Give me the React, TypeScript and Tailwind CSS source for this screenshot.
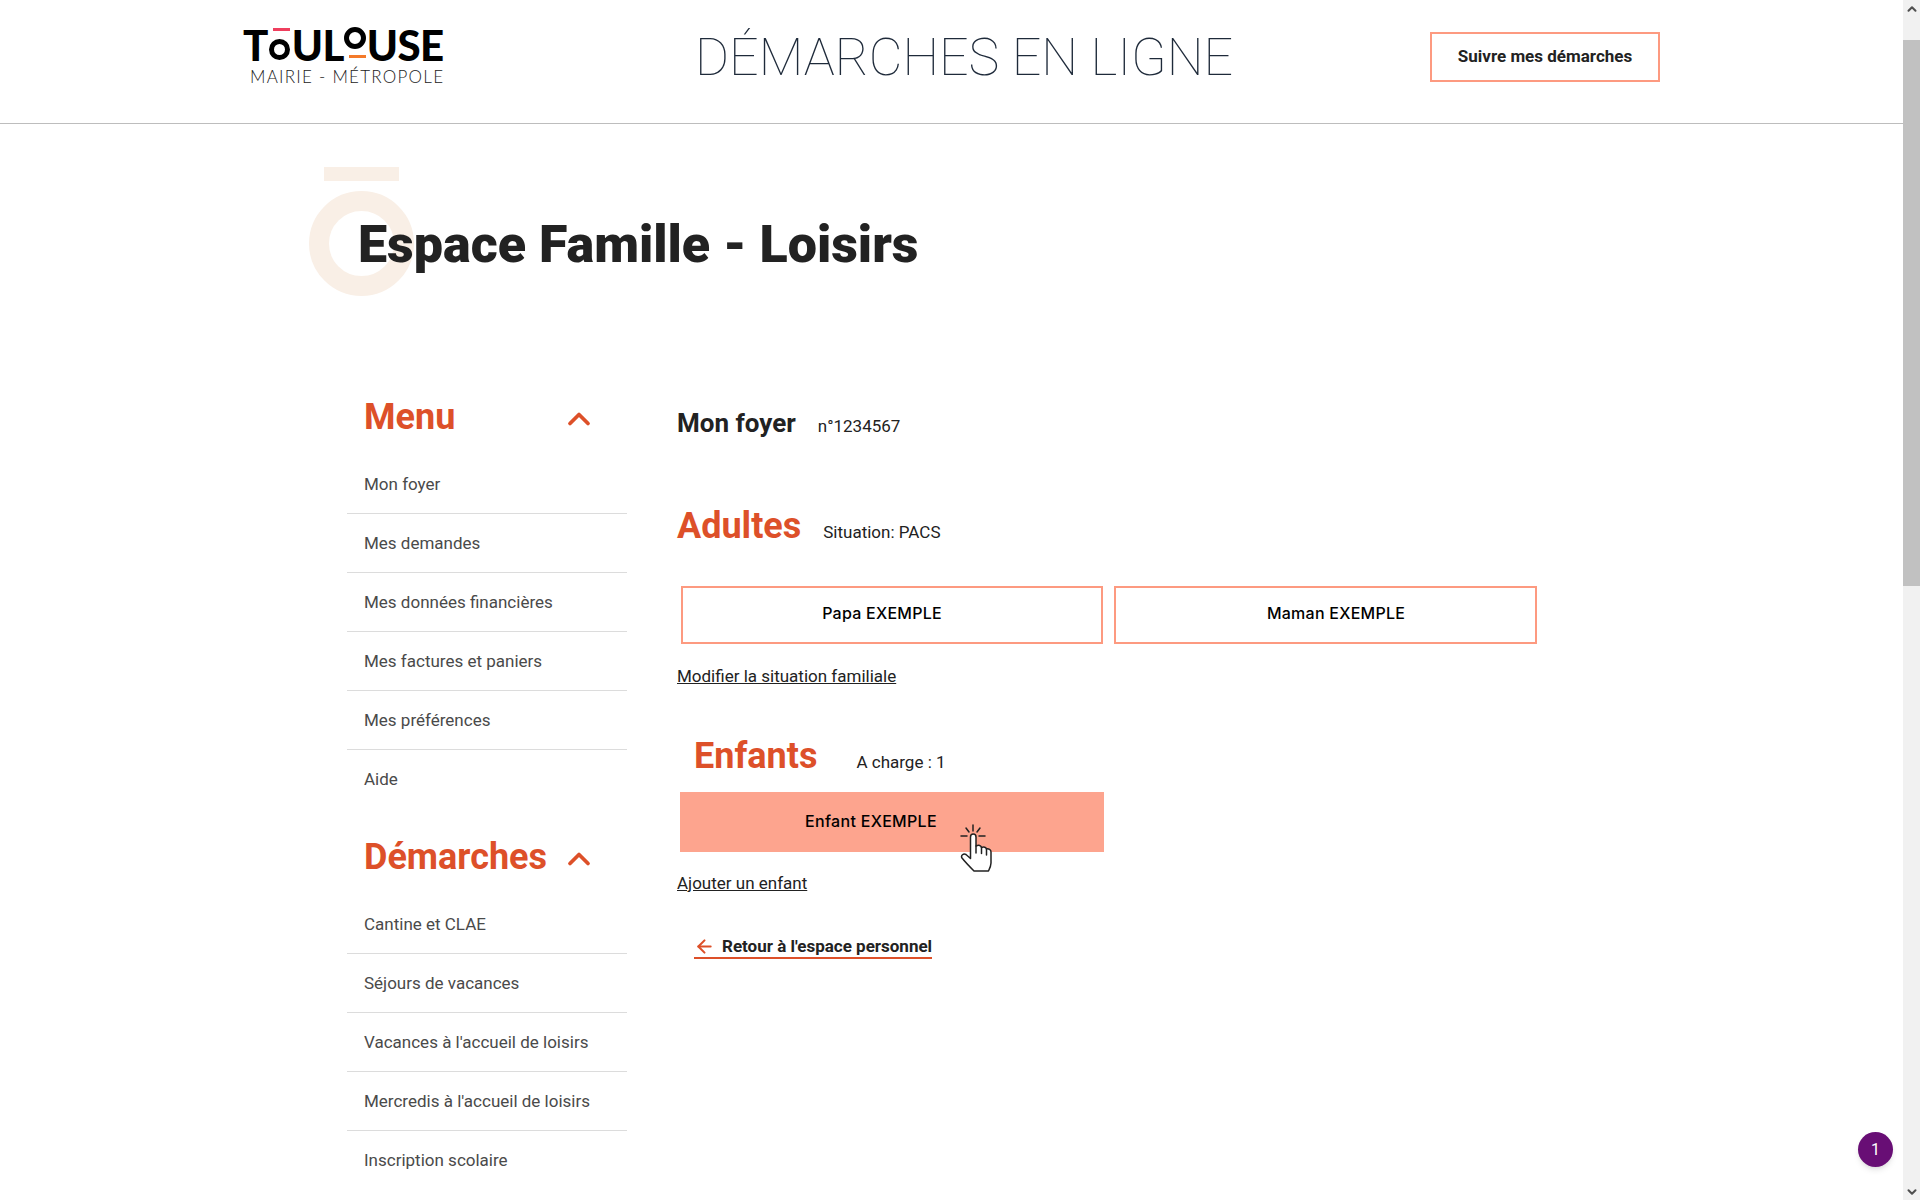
import React from 'react';
import { ArrowLeft, ChevronDown, ChevronUp } from 'lucide-react';

const menuItems = ['Mon foyer', 'Mes demandes', 'Mes données financières', 'Mes factures et paniers', 'Mes préférences', 'Aide'];
const demarches = ['Cantine et CLAE', 'Séjours de vacances', "Vacances à l'accueil de loisirs", 'Mercredis à l\'accueil de loisirs', 'Inscription scolaire'];

const Logo = () => (
  <div className="flex w-[201px] flex-col">
    {/* Lettres du logo */}
    <div className="flex h-[36px] items-start text-[42px] font-black leading-[37px] tracking-[-0.6px] text-black font-['Lato']">
      <span>T</span>
      <span className="ml-[1px] mr-[2px] flex w-[21px] flex-col items-end">
        <span className="mt-[1px] h-[3px] w-[17px] bg-[#ef3f5e]" />
        <span className="mt-[8px] size-[21px] rounded-full border-[5px] border-black" />
      </span>
      <span>UL</span>
      <span className="mx-[1px] flex w-[21px] flex-col items-end">
        <span className="size-[22px] rounded-full border-[5px] border-black" />
        <span className="mt-[6px] h-[3px] w-[17px] bg-[#f47a2a]" />
      </span>
      <span>USE</span>
    </div>
    <div className="mt-[4px] whitespace-nowrap pl-[7px] text-[17px] font-light leading-[20px] tracking-[1.25px] text-[#222] font-['Lato']">
      MAIRIE - MÉTROPOLE
    </div>
  </div>
);

const HandCursor = () => (
  <svg className="absolute left-[280px] top-[31px]" width="33" height="52" viewBox="0 0 33 50" fill="none" stroke="#222" strokeWidth="1.5" strokeLinecap="round" strokeLinejoin="round">
    <path d="M13 1v6M6 4l3 4M20 4l-3 4M1 12h6M19 12h6" />
    <path fill="#fff" d="M10.5 13c0-4 5.5-4 5.5 0v9c3-1.5 5-.5 5.5 1.5 2.5-1 4.5 0 5 1.5 2-.5 4.5.5 4.5 3v11c0 3-1 5-2.5 8H14c-4-4-8-8-12-13-1.5-2.5 1.5-5 4-3.5l4.5 4z" />
    <path d="M16 22v7M21.5 23.5v6M26.5 25v6" />
  </svg>
);

const SideSection = ({ title, items, className }: { title: string; items: string[]; className?: string }) => (
  <div className={className}>
    <div className="flex h-[76px] items-center justify-between pl-[17px] pr-[30px]">
      <h2 className="text-[36px] font-bold text-[#dd5029]">{title}</h2>
      <ChevronUp size={36} strokeWidth={2.5} className="mt-[3px] text-[#dd5029]" />
    </div>
    <ul>
      {items.map((item) => (
        <li key={item} className="flex h-[59px] items-center border-b border-[#dcdcdc] pl-[17px] pt-[1px] text-[17px] text-[#4a4a4a] last:border-b-0">
          {item}
        </li>
      ))}
    </ul>
  </div>
);

const Scrollbar = () => (
  <div className="flex h-[1200px] w-[17px] shrink-0 flex-col bg-[#f1f1f1]">
    <div className="flex h-[17px] items-center justify-center">
      <ChevronUp size={14} strokeWidth={3.5} className="text-[#505050]" />
    </div>
    <div className="mt-[23px] h-[546px] bg-[#c1c1c1]" />
    <div className="mt-auto flex h-[17px] items-center justify-center">
      <ChevronDown size={14} strokeWidth={3.5} className="text-[#505050]" />
    </div>
  </div>
);

export default function App() {
  return (
    <div className="flex h-[1200px] overflow-hidden bg-white font-['Roboto'] text-[#222]">
      <div className="relative min-w-0 flex-1">
        {/* Header */}
        <header className="flex h-[124px] items-center border-b border-[#bdbdbd] pb-[10px] pl-[243px] pr-[243px]">
          <Logo />
          <p className="ml-[251px] mt-[2px] whitespace-nowrap text-[52px] font-thin leading-none text-[#1e2a3a]">DÉMARCHES EN LIGNE</p>
          <button className="ml-auto h-[50px] w-[230px] border-2 border-[#fd9a80] text-[17px] font-bold text-[#222]">Suivre mes démarches</button>
        </header>

        {/* Titre */}
        <div className="relative h-[255px] pl-[358px] pt-[91px]">
          <div className="absolute left-[324px] top-[43px] h-[14px] w-[75px] bg-[#f9efe6]" />
          <div className="absolute left-[309px] top-[67px] h-[105px] w-[105px] rounded-full border-[20px] border-[#f9efe6]" />
          <h1 className="relative text-[52px] font-black leading-[60px] text-[#222]">Espace Famille - Loisirs</h1>
        </div>

        <div className="flex pl-[347px]">
          {/* Menu latéral */}
          <aside className="w-[280px] shrink-0">
            <SideSection title="Menu" items={menuItems} />
            <SideSection title="Démarches" items={demarches} className="mt-[10px]" />
          </aside>

          {/* Contenu */}
          <main className="relative ml-[50px] w-[860px]">
            <div className="flex items-baseline pt-[24px]">
              <h2 className="text-[26px] font-bold leading-[40px]">Mon foyer</h2>
              <span className="ml-[22px] text-[17px]">n°1234567</span>
            </div>

            <div className="mt-[58px] flex items-baseline">
              <h2 className="text-[36px] font-bold leading-[50px] text-[#dd5029]">Adultes</h2>
              <span className="ml-[22px] text-[17px]">Situation: PACS</span>
            </div>

            <div className="mt-[35px] flex gap-[11px] pl-[4px]">
              <button className="h-[58px] w-[422px] border-2 border-[#fd9a80] pb-[4px] pr-[20px] text-base font-medium tracking-[0.25px] text-black font-['Inter']">Papa EXEMPLE</button>
              <button className="h-[58px] w-[423px] border-2 border-[#fd9a80] pb-[4px] pl-[21px] text-base font-medium tracking-[0.25px] text-black font-['Inter']">Maman EXEMPLE</button>
            </div>

            <a className="mt-[22px] block text-[17px] leading-[20px] underline">Modifier la situation familiale</a>

            <div className="mt-[45px] flex items-baseline pl-[17px]">
              <h2 className="text-[36px] font-bold leading-[50px] text-[#dd5029]">Enfants</h2>
              <span className="ml-[39px] text-[17px]">A charge : 1</span>
            </div>

            <div className="relative mt-[11px] ml-[3px] h-[60px] w-[424px] bg-[#fda48e]">
              <button className="h-full w-full pr-[42px] pb-[2px] text-base font-medium tracking-[0.3px] text-black font-['Inter']">Enfant EXEMPLE</button>
              <HandCursor />
            </div>

            <a className="mt-[21px] block text-[17px] leading-[20px] underline">Ajouter un enfant</a>

            <a className="ml-[17px] mt-[43px] inline-flex items-center gap-[7px] border-b-2 border-[#dd5029] text-[17px] font-bold leading-[19px]">
              <ArrowLeft size={21} strokeWidth={2.4} className="text-[#dd5029]" />
              Retour à l'espace personnel
            </a>
          </main>
        </div>

        {/* Badge */}
        <div className="absolute left-[1858px] top-[1132px] flex size-[35px] items-center justify-center rounded-full bg-[#680e75] text-base text-white shadow-md">1</div>
      </div>
      <Scrollbar />
    </div>
  );
}
